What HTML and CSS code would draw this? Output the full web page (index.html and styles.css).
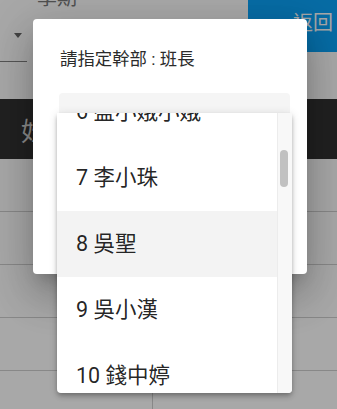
FILE: index.html
```html
<!DOCTYPE html>
<html lang="zh-Hant">
<head>
<meta charset="utf-8">
<title>班長</title>
<link rel="stylesheet" href="styles.css">
</head>
<body>
<div class="page">
  <div class="toolbar">
    <div class="field field-short">
      <div class="select-row"><span class="arrow"></span></div>
    </div>
    <div class="field field-term">
      <div class="field-label">學期</div>
    </div>
    <button class="back-btn">返回</button>
  </div>
  <div class="table-head"><span class="head-cell">姓名</span></div>
  <div class="table-row"><div class="cell cell-first"></div><div class="cell"></div></div>
  <div class="table-row"><div class="cell cell-first"></div><div class="cell"></div></div>
  <div class="table-row"><div class="cell cell-first"></div><div class="cell"></div></div>
  <div class="table-row"><div class="cell cell-first"></div><div class="cell"></div></div>
  <div class="table-row"><div class="cell cell-first"></div><div class="cell"></div></div>
</div>

<div class="scrim"></div>

<div class="dialog">
  <div class="dialog-title">請指定幹部 : 班長</div>
  <div class="select-field"></div>
</div>

<div class="option-panel">
  <div class="option-list">
    <div class="option-scroll">
      <div class="option">6 盛小娥小娥</div>
      <div class="option">7 李小珠</div>
      <div class="option option-active">8 吳聖</div>
      <div class="option">9 吳小漢</div>
      <div class="option">10 錢中婷</div>
      <div class="option">11 陳大文</div>
    </div>
  </div>
  <div class="scrollbar"><div class="thumb"></div></div>
</div>
</body>
</html>
```

FILE: styles.css
```css
html, body {
  margin: 0;
  padding: 0;
}
body {
  width: 337px;
  height: 409px;
  overflow: hidden;
  position: relative;
  background: #ffffff;
  font-family: Roboto, "Noto Sans CJK TC", "Noto Sans", sans-serif;
}

.page {
  margin-top: -20px;
}

.toolbar {
  display: flex;
  height: 119px;
}
.field-short {
  width: 27px;
  flex: none;
}
.select-row {
  margin-top: 30px;
  height: 51px;
  border-bottom: 1px solid #818181;
  display: flex;
  align-items: center;
  justify-content: flex-end;
  padding-right: 5px;
  box-sizing: content-box;
}
.arrow {
  width: 0;
  height: 0;
  border-left: 4.5px solid transparent;
  border-right: 4.5px solid transparent;
  border-top: 5px solid #666666;
}
.field-term {
  flex: 1;
  padding-left: 10px;
}
.field-label {
  margin-top: 6px;
  font-size: 20px;
  line-height: 24px;
  color: #7a7a7a;
}
.back-btn {
  flex: none;
  width: 89px;
  height: 72px;
  border: 0;
  margin: 0;
  padding: 31px 4px 0 0;
  background: #0ca4fa;
  color: #ffffff;
  font-family: Roboto, "Noto Sans CJK TC", sans-serif;
  font-size: 20px;
  line-height: 24px;
  display: flex;
  align-items: flex-start;
  justify-content: flex-end;
}

.table-head {
  height: 60px;
  background: #333333;
  display: flex;
  align-items: center;
  padding-left: 21px;
}
.head-cell {
  font-size: 26px;
  color: #d2d2d2;
}
.table-row {
  display: flex;
  height: 53px;
  border-bottom: 1px solid #cfcfcf;
  box-sizing: border-box;
}
.table-row:first-of-type {
  height: 54px;
}
.cell {
  flex: 1;
}
.cell-first {
  flex: none;
  width: 152px;
  border-right: 1px solid #cfcfcf;
}

.scrim {
  position: absolute;
  inset: 0;
  background: rgba(0, 0, 0, 0.34);
}

.dialog {
  position: absolute;
  left: 33px;
  top: 19px;
  width: 274px;
  height: 255px;
  box-sizing: border-box;
  padding: 28px 17px 0 26px;
  background: #ffffff;
  border-radius: 4px;
  box-shadow: 0 11px 15px -7px rgba(0,0,0,.2), 0 24px 38px 3px rgba(0,0,0,.14), 0 9px 46px 8px rgba(0,0,0,.12);
}
.dialog-title {
  padding-left: 1px;
  font-size: 17.4px;
  line-height: 24px;
  color: #2b2b2b;
}
.select-field {
  margin-top: 22px;
  height: 56px;
  background: #f5f5f5;
  border-radius: 4px 4px 0 0;
}

.option-panel {
  position: absolute;
  left: 57px;
  top: 113px;
  width: 235px;
  height: 280px;
  background: #ffffff;
  display: flex;
  border-radius: 0 0 4px 4px;
  box-shadow: 0 2px 4px -1px rgba(0,0,0,.2), 0 4px 5px 0 rgba(0,0,0,.14), 0 1px 10px 0 rgba(0,0,0,.12);
  overflow: hidden;
}
.option-list {
  flex: 1;
  overflow: hidden;
}
.option-scroll {
  margin-top: -34px;
}
.option {
  height: 66px;
  box-sizing: border-box;
  padding-bottom: 5px;
  display: flex;
  align-items: center;
  padding-left: 19px;
  font-size: 21.5px;
  color: rgba(0, 0, 0, 0.87);
  white-space: nowrap;
}
.option-active {
  background: #f3f3f3;
}
.scrollbar {
  flex: none;
  width: 15px;
  box-sizing: border-box;
  background: #f8f8f8;
  border-left: 1px solid #ececec;
  padding-left: 2px;
}
.thumb {
  margin-top: 37px;
  width: 8px;
  height: 37px;
  border-radius: 4px;
  background: #c1c1c1;
}
```
